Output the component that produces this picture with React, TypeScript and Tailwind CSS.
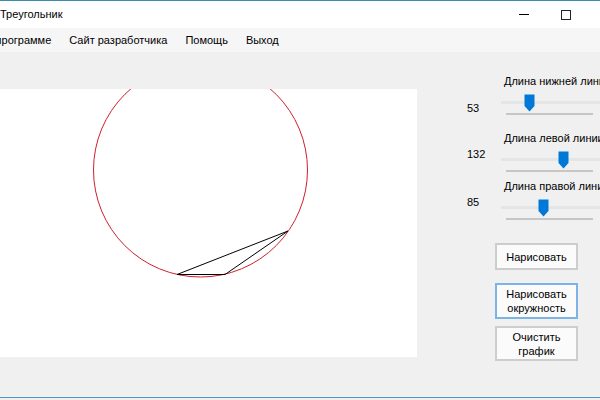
const FONT = "font-['Liberation_Sans','Noto_Sans',sans-serif]";

function Thumb({ left }: { left: number }) {
  return (
    <svg
      className="absolute top-0"
      style={{ left }}
      width="11"
      height="18"
      viewBox="0 0 11 18"
    >
      <path d="M0.5 0.5 H10.5 V12 L5.5 17.5 L0.5 12 Z" fill="#0078d7" />
    </svg>
  );
}

function SliderGroup({
  label,
  value,
  thumb,
  labelMt,
  numMt,
}: {
  label: string;
  value: string;
  thumb: number;
  labelMt: string;
  numMt: string;
}) {
  return (
    <div className="flex flex-col">
      <div className={`${labelMt} ml-[37px] whitespace-nowrap leading-[15px]`}>{label}</div>
      <div className="mt-[5px] flex items-start">
        <span className={`${numMt} w-[34px] shrink-0 leading-[15px]`}>{value}</span>
        <div className="relative h-[22px] w-[110px] shrink-0">
          <div className="mt-[7px] h-[3px] w-full bg-[#e4e6e6]" />
          <div className="ml-[5px] mt-[9px] h-[2px] w-[87px] bg-[#c6c6c6]" />
          <Thumb left={thumb} />
        </div>
      </div>
    </div>
  );
}

export default function App() {
  return (
    <div className={`flex h-[400px] w-[600px] flex-col overflow-hidden bg-[#f0f0f0] text-[11px] text-black ${FONT}`}>
      <div className="h-px shrink-0 bg-[#3a8db0]" />

      {/* title bar */}
      <div className="flex h-[27px] shrink-0 items-center bg-white">
        <span className="leading-none">Треугольник</span>
        <div className="ml-auto mr-[29px] flex items-center gap-[32px]">
          <div className="h-px w-[10px] bg-black" />
          <div className="h-[10px] w-[10px] border border-[#222]" />
        </div>
      </div>

      {/* menu */}
      <div className="flex h-[24px] shrink-0 items-center bg-[#f6f6f6] whitespace-nowrap">
        <span className="-ml-[16px] pr-[9px]">О программе</span>
        <span className="px-[9px]">Сайт разработчика</span>
        <span className="px-[9px]">Помощь</span>
        <span className="px-[9px]">Выход</span>
      </div>

      <div className="flex h-[345px] shrink-0">
        {/* drawing surface */}
        <div className="relative mt-[37px] h-[268px] w-[417px] shrink-0 overflow-hidden bg-white">
          <svg className="absolute inset-0" width="417" height="268" viewBox="0 0 417 268">
            <circle cx="200.5" cy="81" r="107" fill="none" stroke="#cf1f2f" strokeWidth="1" />
            <polyline
              points="177,185.5 225,185.5 288,142"
              fill="none"
              stroke="#000"
              strokeWidth="1"
            />
            <line x1="177" y1="185.5" x2="288" y2="142" stroke="#000" strokeWidth="1" />
          </svg>
        </div>

        {/* controls */}
        <div className="ml-[50px] flex shrink-0 flex-col">
          <SliderGroup label="Длина нижней линии" value="53" thumb={23} labelMt="mt-[22px]" numMt="mt-[7px]" />
          <SliderGroup label="Длина левой линии" value="132" thumb={57} labelMt="mt-[15px]" numMt="-mt-[4px]" />
          <SliderGroup label="Длина правой линии" value="85" thumb={37} labelMt="mt-[6px]" numMt="-mt-[4px]" />

          <button className="ml-[28px] mt-[22px] h-[27px] w-[83px] border-2 border-[#cdcdcd] bg-[#fbfbfb] leading-[14px]">
            Нарисовать
          </button>
          <button className="ml-[28px] mt-[13px] h-[36px] w-[83px] border-2 border-[#7db4e6] bg-[#fbfbfb] leading-[14px]">
            Нарисовать
            <br />
            окружность
          </button>
          <button className="ml-[28px] mt-[7px] h-[35px] w-[83px] border-2 border-[#cdcdcd] bg-[#fbfbfb] leading-[14px]">
            Очистить
            <br />
            график
          </button>
        </div>
      </div>

      <div className="h-px shrink-0 bg-[#4a98c9]" />
    </div>
  );
}
